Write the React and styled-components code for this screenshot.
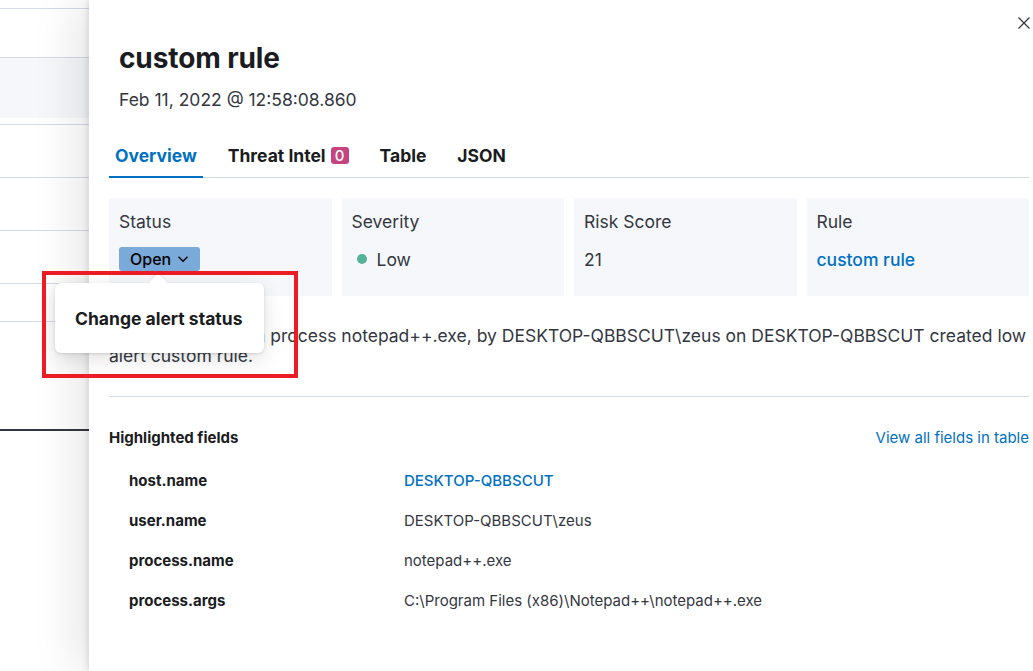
import React from "react";
import styled, { createGlobalStyle } from "styled-components";

const Global = createGlobalStyle`
  html, body { margin: 0; padding: 0; background: #fff; }
  body { font-family: Inter, "Noto Sans", sans-serif; color: #343741; -webkit-font-smoothing: antialiased; }
  * { box-sizing: border-box; }
`;

const Page = styled.div`
  position: relative;
  display: flex;
  width: 1033px;
  height: 671px;
  overflow: hidden;
  background: #fff;
`;

const BackTable = styled.div`
  width: 89px;
  flex: none;
  display: flex;
  flex-direction: column;
`;

const BackRow = styled.div`
  height: ${(p) => p.$h}px;
  flex: none;
  border-bottom: ${(p) => (p.$dark ? "2px solid #343741" : p.$line ? "1px solid #d3dae6" : "none")};
  background: ${(p) => (p.$shaded ? "#f5f7fa" : "transparent")};
  box-shadow: ${(p) => (p.$shaded ? "inset 0 -6px 0 #fff" : "none")};
`;

const Flyout = styled.div`
  position: relative;
  flex: 1;
  min-width: 0;
  background: #fff;
  padding: 0 4px 0 20px;
  box-shadow: -2px 0 6px rgba(0, 0, 0, 0.1), -16px 0 40px rgba(0, 0, 0, 0.09);
  z-index: 1;
`;

const CloseButton = styled.button`
  position: absolute;
  top: 15px;
  right: 1px;
  width: 16px;
  height: 16px;
  padding: 0;
  border: 0;
  background: none;
  display: flex;
  align-items: center;
  justify-content: center;
  color: #343741;
`;

const Header = styled.header`
  padding: 41px 0 0 10px;
`;

const Title = styled.h1`
  margin: 0;
  font-size: 28px;
  line-height: 34px;
  font-weight: 700;
  color: #1a1c21;
  letter-spacing: -0.1px;
`;

const DateLine = styled.div`
  margin-top: 14px;
  font-size: 17.5px;
  line-height: 22px;
  color: #343741;
`;

const TabBar = styled.nav`
  margin-top: 21px;
  display: flex;
  gap: 19px;
  border-bottom: 1px solid #d3dae6;
`;

const Tab = styled.div`
  display: flex;
  align-items: center;
  gap: 5px;
  height: 46px;
  padding: 0 6px;
  font-size: 17.5px;
  font-weight: 700;
  color: ${(p) => (p.$active ? "#0071c2" : "#1a1c21")};
  box-shadow: ${(p) => (p.$active ? "inset 0 -2px 0 #0071c2" : "none")};
  margin-bottom: -1px;
`;

const Badge = styled.span`
  display: inline-flex;
  align-items: center;
  justify-content: center;
  width: 18px;
  height: 17px;
  border-radius: 3px;
  background: #c5437e;
  color: #fff;
  font-size: 15px;
  font-weight: 500;
`;

const Cards = styled.div`
  margin-top: 20px;
  display: grid;
  grid-template-columns: repeat(4, 1fr);
  gap: 10px;
`;

const Card = styled.div`
  height: 98px;
  background: #f5f7fa;
  padding: 12px 10px;
  display: flex;
  flex-direction: column;
  gap: 13px;
`;

const CardLabel = styled.div`
  font-size: 17.5px;
  line-height: 24px;
  color: #343741;
`;

const CardValue = styled.div`
  display: flex;
  align-items: center;
  gap: 10px;
  height: 24px;
  font-size: 17.5px;
  color: ${(p) => (p.$link ? "#0071c2" : "#343741")};
  font-weight: ${(p) => (p.$link ? 500 : 400)};
  padding-left: ${(p) => (p.$indent ? 5 : 0)}px;
`;

const Dot = styled.span`
  width: 10px;
  height: 10px;
  border-radius: 50%;
  background: #54b399;
`;

const StatusButton = styled.button`
  display: inline-flex;
  align-items: center;
  gap: 6px;
  height: 24px;
  padding: 0 11px;
  border: 0;
  border-radius: 3px;
  background: #79aad9;
  color: #000;
  font-family: inherit;
  font-size: 16px;
  font-weight: 500;
`;

const Reason = styled.p`
  margin: 30px 0 0;
  font-size: 17.5px;
  line-height: 20px;
  color: #343741;
`;

const Divider = styled.hr`
  margin: 30px 0 0;
  border: 0;
  border-top: 1px solid #d3dae6;
`;

const SectionHead = styled.div`
  margin-top: 31px;
  display: flex;
  justify-content: space-between;
  align-items: baseline;
`;

const SectionTitle = styled.h3`
  margin: 0;
  font-size: 15px;
  line-height: 20px;
  font-weight: 700;
  color: #1a1c21;
`;

const TextLink = styled.a`
  font-size: 15px;
  color: #0071c2;
  text-decoration: none;
`;

const FieldTable = styled.div`
  margin-top: 23px;
  display: grid;
  grid-template-columns: 275px 1fr;
  grid-auto-rows: 40px;
  padding-left: 20px;
`;

const FieldKey = styled.div`
  font-size: 15px;
  font-weight: 700;
  color: #1a1c21;
`;

const FieldValue = styled.div`
  font-size: 15px;
  color: ${(p) => (p.$link ? "#0071c2" : "#343741")};
  font-weight: ${(p) => (p.$link ? 500 : 400)};
`;

const Popover = styled.div`
  position: absolute;
  left: 55px;
  top: 283px;
  width: 209px;
  height: 70px;
  padding: 0 20px;
  display: flex;
  align-items: center;
  background: #fff;
  border-radius: 6px;
  box-shadow: 0 1px 3px rgba(0, 0, 0, 0.12), 0 6px 20px rgba(0, 0, 0, 0.12);
  z-index: 5;
  font-size: 17.5px;
  font-weight: 700;
  color: #1a1c21;

  &::before {
    content: "";
    position: absolute;
    left: 97px;
    top: -7px;
    width: 12px;
    height: 12px;
    background: #fff;
    transform: rotate(45deg);
    box-shadow: -2px -2px 3px rgba(0, 0, 0, 0.05);
  }
`;

const Highlight = styled.div`
  position: absolute;
  left: 42px;
  top: 271px;
  width: 256px;
  height: 107px;
  border: 4px solid #ed1c24;
  z-index: 6;
  pointer-events: none;
`;

const fields = [
  ["host.name", "DESKTOP-QBBSCUT", true],
  ["user.name", "DESKTOP-QBBSCUT\\zeus"],
  ["process.name", "notepad++.exe"],
  ["process.args", "C:\\Program Files (x86)\\Notepad++\\notepad++.exe"],
];

export default function App() {
  return (
    <>
      <Global />
      <Page>
        <BackTable>
          <BackRow $h={9} $line />
          <BackRow $h={49} $line />
          <BackRow $h={67} $line $shaded />
          <BackRow $h={53} $line />
          <BackRow $h={53} $line />
          <BackRow $h={53} $line />
          <BackRow $h={38} $line />
          <BackRow $h={109} $dark />
        </BackTable>

        <Flyout>
          <CloseButton aria-label="Close">
            <svg width="14" height="14" viewBox="0 0 14 14">
              <path d="M1.5 1.5 L12.5 12.5 M12.5 1.5 L1.5 12.5" stroke="#343741" strokeWidth="1.3" fill="none" />
            </svg>
          </CloseButton>

          <Header>
            <Title>custom rule</Title>
            <DateLine>Feb 11, 2022 @ 12:58:08.860</DateLine>
          </Header>

          <TabBar>
            <Tab $active>Overview</Tab>
            <Tab>
              Threat Intel <Badge>0</Badge>
            </Tab>
            <Tab>Table</Tab>
            <Tab>JSON</Tab>
          </TabBar>

          <Cards>
            <Card>
              <CardLabel>Status</CardLabel>
              <CardValue>
                <StatusButton>
                  Open
                  <svg width="12" height="8" viewBox="0 0 12 8">
                    <path d="M1.5 1.8 L6 6.2 L10.5 1.8" stroke="#000" strokeWidth="1.4" fill="none" />
                  </svg>
                </StatusButton>
              </CardValue>
            </Card>
            <Card>
              <CardLabel>Severity</CardLabel>
              <CardValue $indent>
                <Dot />
                Low
              </CardValue>
            </Card>
            <Card>
              <CardLabel>Risk Score</CardLabel>
              <CardValue>21</CardValue>
            </Card>
            <Card>
              <CardLabel>Rule</CardLabel>
              <CardValue $link>custom rule</CardValue>
            </Card>
          </Cards>

          <Reason>
            process event with process notepad++.exe, by DESKTOP-QBBSCUT\zeus on DESKTOP-QBBSCUT created low alert custom rule.
          </Reason>

          <Divider />

          <SectionHead>
            <SectionTitle>Highlighted fields</SectionTitle>
            <TextLink href="#">View all fields in table</TextLink>
          </SectionHead>

          <FieldTable>
            {fields.map(([k, v, link]) => (
              <React.Fragment key={k}>
                <FieldKey>{k}</FieldKey>
                <FieldValue $link={link}>{v}</FieldValue>
              </React.Fragment>
            ))}
          </FieldTable>
        </Flyout>

        <Popover>Change alert status</Popover>
        <Highlight />
      </Page>
    </>
  );
}
